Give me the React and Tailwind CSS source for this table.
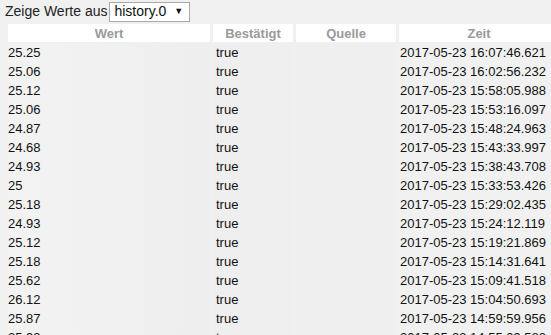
import React from "react";

const rows = [
  ["25.25", "2017-05-23 16:07:46.621"],
  ["25.06", "2017-05-23 16:02:56.232"],
  ["25.12", "2017-05-23 15:58:05.988"],
  ["25.06", "2017-05-23 15:53:16.097"],
  ["24.87", "2017-05-23 15:48:24.963"],
  ["24.68", "2017-05-23 15:43:33.997"],
  ["24.93", "2017-05-23 15:38:43.708"],
  ["25", "2017-05-23 15:33:53.426"],
  ["25.18", "2017-05-23 15:29:02.435"],
  ["24.93", "2017-05-23 15:24:12.119"],
  ["25.12", "2017-05-23 15:19:21.869"],
  ["25.18", "2017-05-23 15:14:31.641"],
  ["25.62", "2017-05-23 15:09:41.518"],
  ["26.12", "2017-05-23 15:04:50.693"],
  ["25.87", "2017-05-23 14:59:59.956"],
  ["25.93", "2017-05-23 14:55:09.583"],
];

export default function App() {
  return (
    <div className="w-[551px] h-[335px] overflow-hidden bg-[#f0f0f0] text-[#111] font-['Liberation_Sans',Arial,sans-serif]">
      {/* source selector */}
      <div className="flex items-center h-[22px] pl-[5px] text-[14px]">
        <span className="text-[#222]">Zeige Werte aus</span>
        <div className="ml-[2px] mt-[1px] flex items-center h-[20px] pl-[4px] pr-[6px] bg-white border border-[#a9a9a9] text-[14px]">
          <span>history.0</span>
          <span className="ml-[8px] text-[9px]">▼</span>
        </div>
      </div>

      {/* table */}
      <div className="ml-[8px] mt-[2px] text-[13px] leading-none">
        <div className="flex gap-[3px] h-[18px] font-bold text-[#9a9a9a]">
          <div className="w-[202px] shrink-0 bg-white flex items-center justify-center">Wert</div>
          <div className="w-[80px] shrink-0 bg-white flex items-center justify-center">Bestätigt</div>
          <div className="w-[100px] shrink-0 bg-white flex items-center justify-center">Quelle</div>
          <div className="w-[160px] shrink-0 bg-white flex items-center justify-center">Zeit</div>
        </div>
        <div className="flex flex-col pt-[1px]">
          {rows.map(([val, time], i) => (
            <div key={i} className="flex gap-[3px] h-[19px] items-center">
              <div className="w-[202px] shrink-0 h-full flex items-center bg-gradient-to-r from-[#f3f3f3] to-[#eeeeee]">{val}</div>
              <div className="w-[80px] shrink-0 h-full flex items-center pl-[3px] bg-[#efefef]">true</div>
              <div className="w-[100px] shrink-0 h-full bg-[#efefef]"></div>
              <div className="w-[160px] shrink-0 h-full flex items-center pl-[1px] bg-[#f1f1f1]">{time}</div>
            </div>
          ))}
        </div>
      </div>
    </div>
  );
}
